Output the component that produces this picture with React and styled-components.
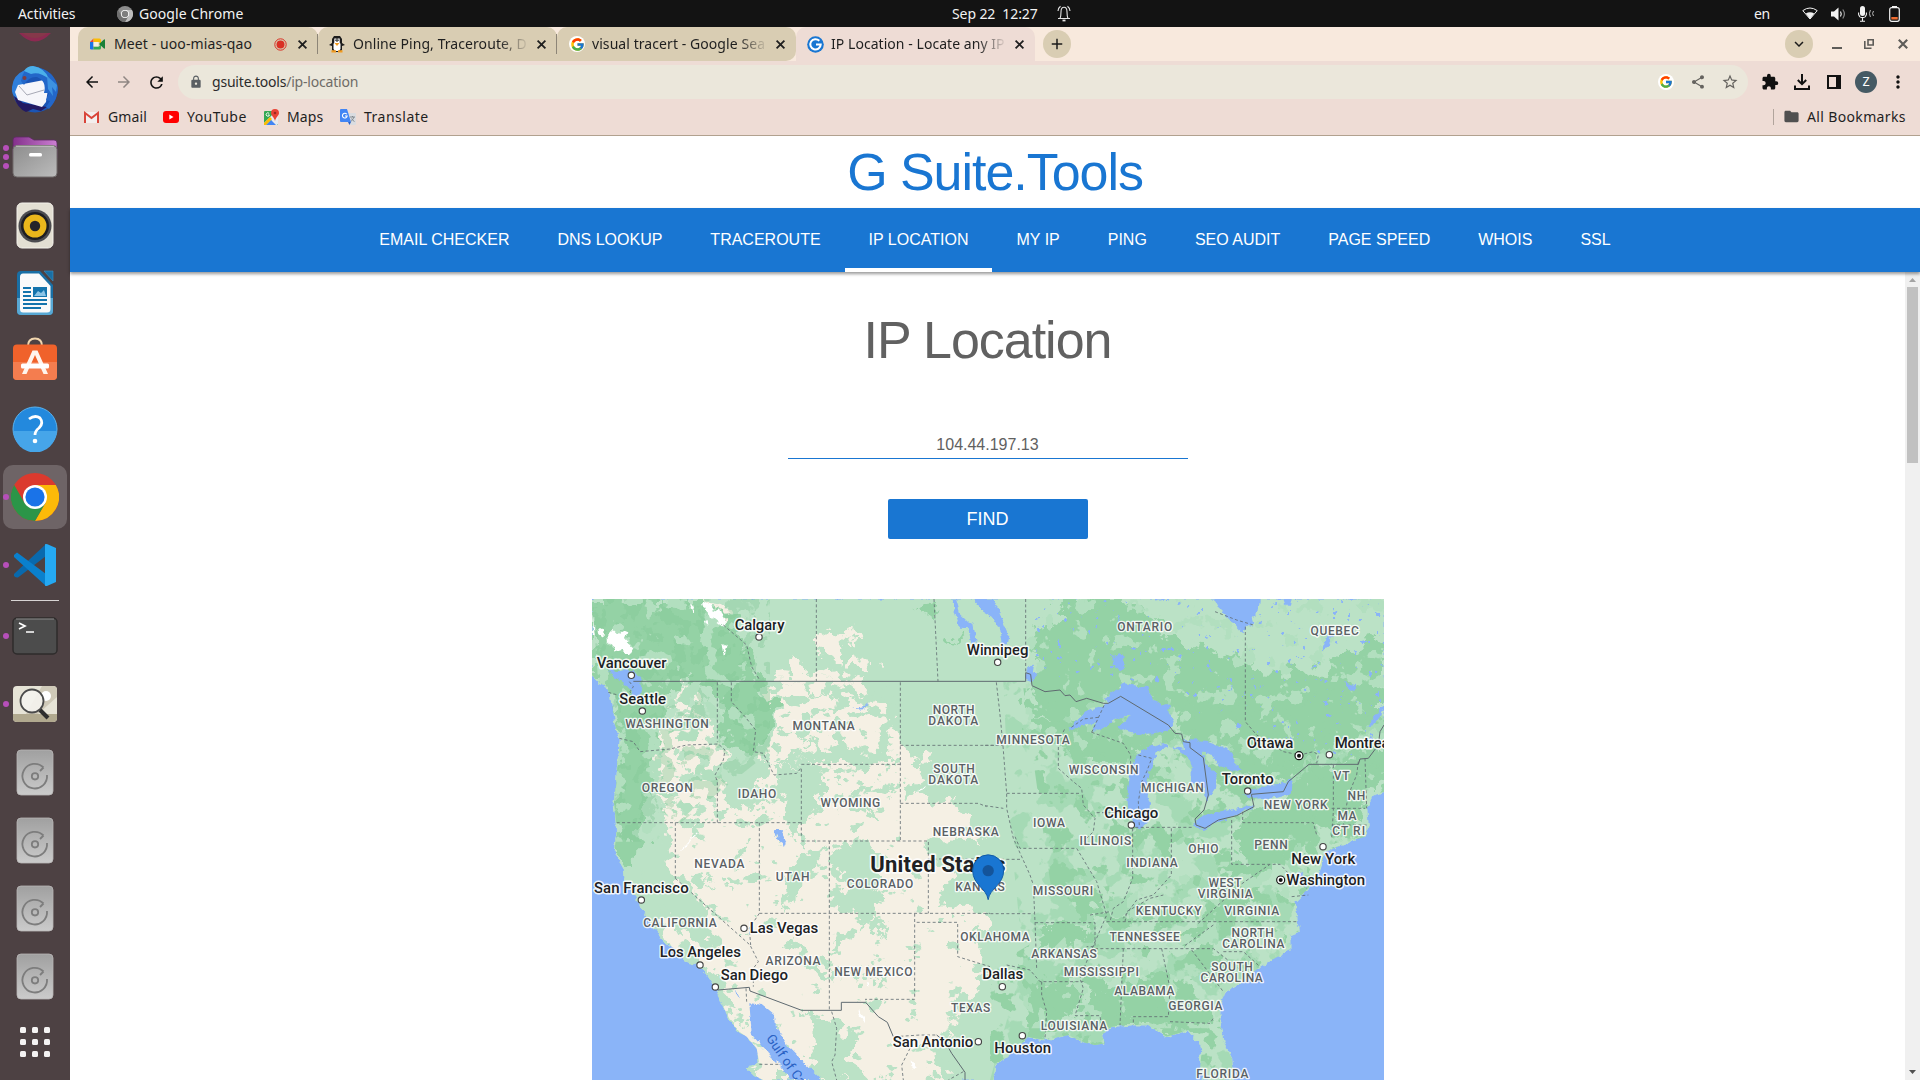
import React from "react";
import styled, { createGlobalStyle } from "styled-components";
import {
  MdArrowBack,
  MdArrowForward,
  MdRefresh,
  MdLock,
  MdShare,
  MdStarBorder,
  MdExtension,
  MdFolder,
  MdMoreVert,
  MdAdd,
  MdKeyboardArrowDown,
} from "react-icons/md";
import { FcGoogle } from "react-icons/fc";

const GlobalStyle = createGlobalStyle`
  *, *::before, *::after { box-sizing: border-box; }
  html, body { margin: 0; padding: 0; background: #fff; overflow: hidden; }
  svg { display: block; flex: none; }
`;

const uiFont = `"Noto Sans", "Open Sans", sans-serif`;
const pageFont = `"Liberation Sans", Arial, sans-serif`;

const Desktop = styled.div`
  display: flex;
  flex-direction: column;
  width: 1920px;
  height: 1080px;
  overflow: hidden;
  font-family: ${uiFont};
`;

/* ---------- System bar ---------- */

const SystemBar = styled.header`
  display: flex;
  align-items: center;
  height: 27px;
  flex: none;
  padding: 0 20px 0 18px;
  background: #131313;
  color: #f2f2f2;
  font-size: 14px;
`;

const SystemText = styled.span`
  width: ${(p) => p.$w}px;
  margin-left: ${(p) => p.$gap || 0}px;
  letter-spacing: ${(p) => p.$ls || 0}px;
  line-height: 26px;
  white-space: pre;
  flex: none;
`;

const SystemIcon = styled.span`
  display: flex;
  margin-left: ${(p) => p.$gap}px;
`;

const Spacer = styled.div`
  flex: 1;
`;

const Body = styled.div`
  display: flex;
  flex: 1;
  min-height: 0;
`;

/* ---------- Dock ---------- */

const Dock = styled.nav`
  display: flex;
  flex-direction: column;
  align-items: stretch;
  width: 70px;
  flex: none;
  background: #4d4143;
  overflow: hidden;
`;

const DockSlot = styled.div`
  display: flex;
  align-items: center;
  height: ${(p) => p.$h || 68}px;
  flex: none;
`;

const Dot = styled.i`
  width: 6px;
  height: 6px;
  border-radius: 50%;
  background: #b64fb9;
`;

const DockTile = styled.div`
  display: flex;
  align-items: center;
  width: 64px;
  height: 64px;
  margin-left: 3px;
  border-radius: 10px;
  background: ${(p) => (p.$active ? "#6e6466" : "transparent")};
`;

const DockDots = styled.div`
  display: flex;
  flex-direction: column;
  align-items: center;
  justify-content: center;
  gap: 3px;
  width: 8px;
  height: 64px;
  margin-left: -1px;
`;

const DockIcon = styled.div`
  display: flex;
  justify-content: center;
  width: 48px;
  margin-left: 1px;
`;

const DockDivider = styled.hr`
  width: 48px;
  height: 1px;
  margin: 1px 11px 1px;
  border: 0;
  background: #d8d4d4;
  flex: none;
`;

/* ---------- Browser chrome ---------- */

const Browser = styled.div`
  display: flex;
  flex-direction: column;
  flex: 1;
  min-width: 0;
`;

const TabStrip = styled.div`
  display: flex;
  align-items: flex-start;
  height: 34px;
  flex: none;
  padding-left: 8px;
  padding-right: 10px;
  background: #f8e9dd;
`;

const Tab = styled.div`
  display: flex;
  align-items: center;
  width: ${(p) => p.$w}px;
  height: 34px;
  padding: 0 9px 0 ${(p) => p.$left || 11}px;
  border-radius: ${(p) => p.$radius};
  background: ${(p) => (p.$active ? "#eedcd5" : "#d9cdb3")};
  color: #1f1f1f;
  flex: none;
`;

const TabDivider = styled.i`
  width: 1px;
  height: 20px;
  margin: 7px 0 0 -1px;
  background: #8d8577;
  z-index: 1;
`;

const TabTitle = styled.span`
  flex: 1;
  min-width: 0;
  margin-left: ${(p) => p.$gap || 8}px;
  margin-right: ${(p) => (p.$fade ? 6 : 0)}px;
  overflow: hidden;
  white-space: pre;
  font-size: 14px;
  letter-spacing: ${(p) => p.$ls || 0}px;
  line-height: 32px;
  ${(p) => p.$fade && "mask-image: linear-gradient(to right, #000 0 calc(100% - 30px), transparent);"}
`;

const TabClose = styled.span`
  display: flex;
  margin-left: ${(p) => p.$gap || 0}px;
`;

const RoundButton = styled.button`
  display: flex;
  align-items: center;
  justify-content: center;
  width: 28px;
  height: 28px;
  margin: 3px ${(p) => p.$right || 0}px 0 ${(p) => p.$left || 0}px;
  padding: 0;
  border: 0;
  border-radius: 50%;
  background: #d9cdb3;
  color: #1b1b1b;
`;

const WindowControls = styled.div`
  display: flex;
  align-items: center;
  gap: 22px;
  height: 34px;
`;

const Toolbar = styled.div`
  display: flex;
  align-items: center;
  height: 42px;
  flex: none;
  padding: 0 0 0 13px;
  background: #eedcd5;
`;

const NavIcons = styled.div`
  display: flex;
  gap: 14px;
  width: 95px;
`;

const Omnibox = styled.div`
  display: flex;
  align-items: center;
  width: 1570px;
  height: 34px;
  padding: 0 2px 0 11px;
  border-radius: 17px;
  background: #ebe7db;
`;

const Url = styled.span`
  margin-left: 9px;
  flex: 1;
  font-size: 14px;
  letter-spacing: -0.2px;
  line-height: 30px;
  color: #2b2b2b;
`;

const UrlPath = styled.span`
  color: #6f6c67;
`;

const ActionRow = styled.div`
  display: grid;
  grid-auto-flow: column;
  grid-auto-columns: 32px;
  place-items: center;
  margin-left: ${(p) => p.$gap || 0}px;
`;

const GoogleBadge = styled.span`
  display: flex;
  align-items: center;
  justify-content: center;
  width: 16px;
  height: 16px;
  border-radius: 50%;
  background: #fff;
`;

const Avatar = styled.span`
  display: flex;
  align-items: center;
  justify-content: center;
  width: 22px;
  height: 22px;
  border-radius: 50%;
  background: #455a64;
  color: #fff;
  font: 12px Roboto, sans-serif;
`;

const BookmarkBar = styled.div`
  display: flex;
  align-items: center;
  height: 33px;
  flex: none;
  padding: 0 15px 5px 14px;
  border-bottom: 1px solid #b1a18f;
  background: #eedcd5;
`;

const Bookmark = styled.span`
  display: flex;
  align-items: center;
  gap: ${(p) => p.$gap || 8}px;
  width: ${(p) => p.$w}px;
  color: #1f1f1f;
  font-size: 14px;
  line-height: 26px;
  letter-spacing: ${(p) => p.$ls || 0}px;
  white-space: pre;
`;

const BookmarkDivider = styled.i`
  width: 1px;
  height: 16px;
  margin-right: 9px;
  background: #b1a49c;
`;

/* ---------- Page ---------- */

const Page = styled.main`
  display: flex;
  flex-direction: column;
  flex: 1;
  min-height: 0;
  background: #fff;
  font-family: ${pageFont};
`;

const SiteTitle = styled.h1`
  height: 72px;
  margin: 0;
  flex: none;
  color: #1976d2;
  font-size: 52px;
  font-weight: 400;
  line-height: 72px;
  letter-spacing: -0.02em;
  text-align: center;
`;

const SiteNav = styled.nav`
  display: flex;
  justify-content: center;
  height: 64px;
  flex: none;
  background: #1976d2;
  box-shadow: 0 2px 3px rgba(0, 0, 0, 0.4);
  z-index: 1;
`;

const SiteLink = styled.a`
  height: 64px;
  padding: 0 24px;
  border-bottom: 4px solid ${(p) => (p.$active ? "#fff" : "transparent")};
  color: #fff;
  font-size: 16px;
  line-height: 63px;
`;

const Scroller = styled.div`
  display: flex;
  flex: 1;
  min-height: 0;
`;

const Content = styled.section`
  display: flex;
  flex-direction: column;
  align-items: center;
  flex: 1;
`;

const Heading = styled.h2`
  margin: 37px 0 0;
  height: 62px;
  flex: none;
  color: #616161;
  font-size: 52px;
  font-weight: 400;
  line-height: 62px;
  letter-spacing: -0.02em;
`;

const IpInput = styled.div`
  width: 400px;
  height: 29px;
  flex: none;
  margin-top: 59px;
  border-bottom: 1px solid #1976d2;
  color: #616161;
  font-size: 16px;
  line-height: 30px;
  text-align: center;
`;

const FindButton = styled.button`
  width: 200px;
  height: 40px;
  flex: none;
  margin: 40px 0 60px;
  border: 0;
  border-radius: 2px;
  background: #1976d2;
  color: #fff;
  font: 18px/40px ${pageFont};
  padding: 0;
`;

const MapFrame = styled.div`
  width: 792px;
  height: 481px;
  overflow: hidden;
  flex: none;
`;

const ScrollTrack = styled.div`
  display: flex;
  flex-direction: column;
  align-items: center;
  width: 15px;
  padding: 6px 0;
  background: #f0f0f0;
`;

const ScrollThumb = styled.div`
  width: 11px;
  height: 176px;
  margin-top: 5px;
  background: #c1c1c1;
`;

/* ---------- Small icons ---------- */

const CrossIcon = ({ size = 13, color = "#1f1f1f", weight = 1.8 }) => (
  <svg width={size} height={size} viewBox="0 0 13 13">
    <path d="M2.6 2.6 10.4 10.4M10.4 2.6 2.6 10.4" stroke={color} strokeWidth={weight} />
  </svg>
);

const MeetIcon = () => (
  <svg width="17" height="16" viewBox="0 0 17 16">
    <path d="M1 6V12.2Q1 13.5 2.3 13.5H4.5V6Z" fill="#1a73e8" />
    <path d="M1 6 4.5 2.5V6Z" fill="#ea4335" />
    <path d="M4.5 2.5H10.5Q12 2.5 12 4V8L10 6H4.5Z" fill="#fbbc04" />
    <path d="M4.5 10.5H10L12 8V12Q12 13.5 10.5 13.5H4.5Z" fill="#34a853" />
    <path d="M10 8 15 3.4Q16 3 16 4V12Q16 13 15 12.6Z" fill="#188038" />
    <path d="M4.5 6H9.5V10.5H4.5Z" fill="#f4efe0" />
  </svg>
);

const PenguinIcon = () => (
  <svg width="18" height="18" viewBox="0 0 18 18">
    <path d="M6 1H12L14 4V8L17 10 14 11V15L12 17H6L4 15V11L1 10 4 8V4Z" fill="#1c1c1c" />
    <path d="M6.5 7H11.5L12.5 9V14L11 16H7L5.5 14V9Z" fill="#fff" />
    <path d="M6.3 3.5H8.5V7H6.3ZM9.5 3.5H11.7V7H9.5Z" fill="#fff" />
    <path d="M7.4 4.5H8.4V6H7.4ZM9.6 4.5H10.6V6H9.6Z" fill="#111" />
    <path d="M6.5 8H11.5L9 11ZM3.5 15.3H8V17.6H3.5ZM10 15.3H14.5V17.6H10Z" fill="#f29a1f" />
  </svg>
);

const GSuiteIcon = () => (
  <svg width="17" height="17" viewBox="0 0 17 17">
    <circle cx="8.5" cy="8.5" r="8.3" fill="#1976d2" />
    <path d="M12.3 4.8A5.2 5.2 0 1 0 13.7 8.6H9" fill="none" stroke="#fff" strokeWidth="2" />
  </svg>
);

const RecordIcon = () => (
  <svg width="13" height="13" viewBox="0 0 13 13">
    <circle cx="6.5" cy="6.5" r="5.7" fill="none" stroke="#d93025" strokeWidth="1" />
    <circle cx="6.5" cy="6.5" r="4" fill="#d93025" />
  </svg>
);

const GmailIcon = () => (
  <svg width="15" height="12" viewBox="0 0 15 12">
    <path d="M0 1H15V12H0Z" fill="#f3efee" />
    <path d="M1 12V2L7.5 7 14 2V12" fill="none" stroke="#d9453a" strokeWidth="2" />
  </svg>
);

const YouTubeIcon = () => (
  <svg width="16" height="12" viewBox="0 0 16 12">
    <rect width="16" height="12" rx="3" fill="#f00" />
    <path d="M6.3 3.5V8.5L10.5 6Z" fill="#fff" />
  </svg>
);

const MapsIcon = () => (
  <svg width="15" height="16" viewBox="0 0 15 16">
    <rect y="2" width="14" height="14" rx="1" fill="#34a853" />
    <path d="M0 14 12 2H14V15L13 16H10L7 11 2 16H1Z" fill="#e8eaed" />
    <path d="M2 16 7 11 12 16Z" fill="#4285f4" />
    <path d="M0 16V14L6 8 8 10 2 16Z" fill="#fbbc04" />
    <path d="M11 0A4 4 0 0 1 15 4C15 6.5 12 8 11 12 10 8 7 6.5 7 4A4 4 0 0 1 11 0Z" fill="#ea4335" />
    <circle cx="11" cy="4" r="1.3" fill="#9c2a20" />
    <path d="M5.2 4.5A1.7 1.7 0 1 0 5.5 6H4" fill="none" stroke="#fff" strokeWidth=".9" />
  </svg>
);

const TranslateIcon = () => (
  <svg width="16" height="16" viewBox="0 0 16 16">
    <path d="M6 4H15Q16 4 16 5V15Q16 16 15 16H9Z" fill="#dadce0" />
    <path d="M1 0H7L11 13H1Q0 13 0 12V1Q0 0 1 0Z" fill="#4285f4" />
    <path d="M8 13H11L9.5 16Z" fill="#2f5fc4" />
    <path d="M6.8 5.2A2.4 2.4 0 1 0 7.2 7H5" fill="none" stroke="#fff" strokeWidth="1.1" />
    <path d="M10 8H15M12.5 7V8M14 8Q13 11 10.8 12.5M11.5 9.5Q12.5 11.5 14.5 12.5" fill="none" stroke="#7c8288" strokeWidth=".9" />
  </svg>
);

const DownloadIcon = () => (
  <svg width="16" height="16" viewBox="0 0 16 16" fill="none" stroke="#111" strokeWidth="2">
    <path d="M8 0V10M3.8 6 8 10.2 12.2 6M1 11.5V15H15V11.5" />
  </svg>
);

const SidePanelIcon = () => (
  <svg width="14" height="14" viewBox="0 0 14 14">
    <rect x="1" y="1" width="12" height="12" fill="none" stroke="#111" strokeWidth="2" />
    <rect x="9" y="1" width="4" height="12" fill="#111" />
  </svg>
);

const ChromeLogo = ({ size, mono }) => {
  const c = mono ? ["#8d8d8d", "#bdbdbd", "#6f6f6f", "#7d7d7d"] : ["#db3a2e", "#fcba08", "#2b9548", "#1a73e8"];
  return (
    <svg width={size} height={size} viewBox="0 0 48 48">
      <circle cx="24" cy="24" r="24" fill={c[0]} />
      <path d="M24 12H44.8A24 24 0 0 1 24 48L34.4 30Z" fill={c[1]} />
      <path d="M3.2 12A24 24 0 0 0 24 48L34.4 30 13.6 30Z" fill={c[2]} />
      <circle cx="24" cy="24" r="12" fill="#fff" />
      <circle cx="24" cy="24" r="9.6" fill={c[3]} />
    </svg>
  );
};

const BellIcon = () => (
  <svg width="14" height="17" viewBox="0 0 14 17" fill="none" stroke="#e4e4e4" strokeWidth="1.1">
    <path d="M1 13.5H13M3 13.5Q4 11 4 7C4 3.8 5.4 2.3 7 2.3S10 3.8 10 7Q10 11 11 13.5M1 6Q1 3 3.5 1.2M13 6Q13 3 10.5 1.2" />
    <path d="M5.5 15.5H8.5" strokeWidth="1.8" />
  </svg>
);

const WifiIcon = () => (
  <svg width="16" height="13" viewBox="0 0 16 13">
    <path d="M.8 3.6Q8-1.6 15.2 3.6L8 12Z" fill="none" stroke="#f2f2f2" strokeWidth="1" />
    <path d="M3.8 6.6Q8 4 12.2 6.6L8 12Z" fill="#f2f2f2" />
  </svg>
);

const VolumeIcon = () => (
  <svg width="15" height="14" viewBox="0 0 15 14">
    <path d="M0 4.5H3L7.5.5V13.5L3 9.5H0Z" fill="#f2f2f2" />
    <path d="M9.5 4.5Q11 7 9.5 9.5" fill="none" stroke="#f2f2f2" strokeWidth="1.2" />
    <path d="M11.8 2.5Q15 7 11.8 11.5" fill="none" stroke="#8a8a8a" strokeWidth="1.2" />
  </svg>
);

const MicIcon = () => (
  <svg width="16" height="16" viewBox="0 0 16 16">
    <rect x="2" width="5" height="10" rx="2.5" fill="#f2f2f2" />
    <path d="M.6 6.5V8.5A4 4 0 0 0 8.4 8.5V6.5M4.5 12V15M2 15.3H7" fill="none" stroke="#f2f2f2" strokeWidth="1.1" />
    <path d="M12.4 4Q10.5 7.5 12.4 11M15.5 5Q13.6 7.5 15.5 10" fill="none" stroke="#bbb" strokeWidth="1" />
  </svg>
);

const BatteryIcon = () => (
  <svg width="11" height="16" viewBox="0 0 11 16">
    <path d="M3 0H8V2H3Z" fill="#f2f2f2" />
    <rect x=".7" y="1.7" width="9.6" height="13.6" rx="2" fill="none" stroke="#f2f2f2" strokeWidth="1.2" />
    <path d="M2.3 11H8.7V13.5H2.3Z" fill="#ee6b2f" />
  </svg>
);

const MinimizeIcon = () => (
  <svg width="10" height="12" viewBox="0 0 10 12">
    <path d="M0 9H10V11H0Z" fill="#5e5c58" />
  </svg>
);

const RestoreIcon = () => (
  <svg width="10" height="10" viewBox="0 0 10 10" fill="none" stroke="#5e5c58" strokeWidth="1.6">
    <path d="M4 .8H9.2V6H4ZM.8 2V9.2H7.5" />
  </svg>
);

/* ---------- Dock icons ---------- */

const CrimsonRim = () => (
  <svg width="48" height="28" viewBox="0 0 48 28">
    <path d="M8 6Q24 23 40 6Z" fill="#8c2a51" />
    <path d="M11 6Q24 16 37 6Z" fill="#85384a" />
  </svg>
);

const ThunderbirdIcon = () => (
  <svg width="48" height="48" viewBox="0 0 48 48">
    <circle cx="24" cy="25" r="22.5" fill="#1b55b5" />
    <path d="M1 22Q2 10 14 5L12 18 6 34Q0 30 1 22Z" fill="#2f7fdb" />
    <path d="M3 31 12 38 36 42 30 46 22 44 15 47Q6 43 3 31Z" fill="#231a62" />
    <path d="M7 20 33 15 37 24 35 37 31 42 7 35 4 27Z" fill="#f6f6fa" />
    <path d="M8 21 16 30 33 25" fill="none" stroke="#a7a9b5" strokeWidth="1" />
    <path d="M10 16Q12 3 22 1Q44 5 47 23 47 34 38 44L35 42 39 36 35 35 38 28 33 28Q36 16 26 12 18 11 13 20Z" fill="#2367c9" />
    <path d="M13 6Q16 1 22 1 34 3 38 14 28 6 20 9Z" fill="#4bb0ea" />
    <path d="M36 11 46 20 45 27 41 22 42 31 37 24Z" fill="#3d92e0" />
    <circle cx="13.5" cy="13" r="2" fill="#7e3e42" />
  </svg>
);

const FilesIcon = () => (
  <svg width="46" height="42" viewBox="0 0 46 42">
    <defs>
      <linearGradient id="files" x1="0" x2="1" y2="1">
        <stop stopColor="#8d8d8d" />
        <stop offset="1" stopColor="#bcbcbc" />
      </linearGradient>
      <linearGradient id="filesTab">
        <stop stopColor="#84308c" />
        <stop offset="1" stopColor="#cb7fd2" />
      </linearGradient>
    </defs>
    <path d="M1 4Q1 1 4 1H17L22 4H42Q45 4 45 7V22H1Z" fill="url(#filesTab)" stroke="#5d2b62" strokeWidth=".8" />
    <rect x="1" y="9.5" width="44" height="31.5" rx="4" fill="url(#files)" stroke="#706b6b" />
    <path d="M4 10.2H42" stroke="#d2d2d2" strokeWidth=".8" />
    <rect x="17" y="17" width="13" height="3.6" rx="1.5" fill="#fff" />
  </svg>
);

const RhythmboxIcon = () => (
  <svg width="38" height="47" viewBox="0 0 38 47">
    <rect x="1" y="1" width="36" height="45" rx="5" fill="#e3dfd3" stroke="#f4f2ec" />
    <circle cx="19" cy="24" r="16.5" fill="#4c4c50" />
    <circle cx="19" cy="24" r="14" fill="#1e1e22" />
    <circle cx="19" cy="24" r="11.5" fill="#eab71c" />
    <circle cx="19" cy="24" r="5.2" fill="#25252a" />
  </svg>
);

const WriterIcon = () => (
  <svg width="38" height="46" viewBox="0 0 38 46">
    <path d="M5 1H24L37 15V41Q37 45 33 45H5Q1 45 1 41V5Q1 1 5 1Z" fill="#196fa5" />
    <path d="M1 28H37V41Q37 45 33 45H5Q1 45 1 41Z" fill="#58a8d4" />
    <path d="M28 1H37V11Z" fill="#196fa5" stroke="#3d93c7" strokeWidth=".6" />
    <path d="M7 3.5H23L34.5 16V39Q34.5 42.5 31 42.5H7Q4 42.5 4 39V7Q4 3.5 7 3.5Z" fill="#fafafa" />
    <path d="M7 18H15M7 22H15M7 26H15M7 30H31M7 34H31M7 38H25" stroke="#1474ad" strokeWidth="2" />
    <rect x="17" y="17" width="14" height="10" fill="#1474ad" />
    <path d="M18 26 22 21 25 23 28 20 30 26Z" fill="#8cc4e6" />
  </svg>
);

const SoftwareIcon = () => (
  <svg width="46" height="49" viewBox="0 0 46 49">
    <path d="M16 9Q16 1.5 23 1.5T30 9" fill="none" stroke="#f2d6ae" strokeWidth="2" />
    <rect x="1" y="7.5" width="44" height="35.5" rx="4" fill="#f0622b" />
    <path d="M1 25H45V39Q45 43 41 43H5Q1 43 1 39Z" fill="#f47d4f" />
    <path d="M20.5 13.5H25.5L36 37H31.5L23 18 14.5 37H10Z" fill="#fff5ee" />
    <rect x="9" y="26.5" width="28" height="5" rx="1.5" fill="#fff" />
  </svg>
);

const HelpIcon = () => (
  <svg width="46" height="46" viewBox="0 0 46 46">
    <circle cx="23" cy="23" r="22" fill="#2389dd" stroke="#5ab2ee" />
    <path d="M1.5 25A21.5 21.5 0 0 0 44.5 25Z" fill="#46a5e9" />
    <path d="M17 13Q23 8.5 28 12 32 17 27 22 23 25 23 29" fill="none" stroke="#fff" strokeWidth="2.8" />
    <circle cx="23" cy="35" r="2.3" fill="#fff" />
  </svg>
);

const CodeIcon = () => (
  <svg width="44" height="44" viewBox="0 0 44 44">
    <path d="M1 31 33 1V13L5 34.5Q3 35 1 33Z" fill="#0969ad" />
    <path d="M1 12 4 9.5 33 31V43L1 14Z" fill="#0a80cd" />
    <path d="M32 1.2Q33 .6 34.5 1.2L43 5V39L34.5 42.8Q33 43.4 32 42.5Z" fill="#25a9f2" />
  </svg>
);

const TerminalIcon = () => (
  <svg width="46" height="38" viewBox="0 0 46 38">
    <rect x="1" y="1" width="44" height="36" rx="4" fill="#4c4c4c" stroke="#2e2b2b" strokeWidth="1.5" />
    <path d="M4 2H42" stroke="#8a8a8a" />
    <path d="M7 6 13 9 7 12M14 15H22" fill="none" stroke="#fff" strokeWidth="1.7" />
  </svg>
);

const ViewerIcon = () => (
  <svg width="46" height="38" viewBox="0 0 46 38">
    <rect x="1" y="1" width="44" height="36" rx="4" fill="#e6e3d6" />
    <path d="M30 1H41Q45 1 45 5V12L26 29H14Z" fill="#cfc9b8" />
    <path d="M1 29H45V33Q45 37 41 37H5Q1 37 1 33Z" fill="#b1a98f" />
    <circle cx="34" cy="11" r="5" fill="#fff" />
    <circle cx="20" cy="16" r="11.5" fill="#f4f3ee" fillOpacity=".9" stroke="#4b4b4b" strokeWidth="1.8" />
    <path d="M28 25 36 33" stroke="#2e2e2e" strokeWidth="4" />
  </svg>
);

const DiskIcon = ({ id }) => (
  <svg width="38" height="47" viewBox="0 0 38 47">
    <defs>
      <linearGradient id={id} x2="0" y2="1">
        <stop stopColor="#a0a0a0" />
        <stop offset="1" stopColor="#cbcbcb" />
      </linearGradient>
    </defs>
    <rect x="1" y="1" width="36" height="45" rx="4" fill={`url(#${id})`} stroke="#b9b6b6" strokeWidth=".8" />
    <path d="M27.5 18.5A12.3 12.3 0 1 0 31 26M24 22 27.5 18.5" fill="none" stroke="#7d7d7d" strokeWidth="1.8" />
    <circle cx="19" cy="27.3" r="3.2" fill="none" stroke="#7d7d7d" strokeWidth="1.8" />
  </svg>
);

const AppsIcon = () => (
  <svg width="32" height="36" viewBox="0 0 32 36" fill="#f5f3f3">
    {[1, 13, 25].map((y) => [1, 13, 25].map((x) => <rect key={`${x}-${y}`} x={x} y={y} width="6" height="6" rx="1.5" />))}
  </svg>
);

const dockItems = [
  { icon: <ThunderbirdIcon />, dots: 0 },
  { icon: <FilesIcon />, dots: 3 },
  { icon: <RhythmboxIcon />, dots: 0 },
  { icon: <WriterIcon />, dots: 0 },
  { icon: <SoftwareIcon />, dots: 0 },
  { icon: <HelpIcon />, dots: 0 },
  { icon: <ChromeLogo size={48} />, dots: 1, active: true },
  { icon: <CodeIcon />, dots: 1 },
  "divider",
  { icon: <TerminalIcon />, dots: 1 },
  { icon: <ViewerIcon />, dots: 1 },
  { icon: <DiskIcon id="disk1" />, dots: 0 },
  { icon: <DiskIcon id="disk2" />, dots: 0 },
  { icon: <DiskIcon id="disk3" />, dots: 0 },
  { icon: <DiskIcon id="disk4" />, dots: 0 },
  { icon: <AppsIcon />, dots: 0 },
];

/* ---------- Map data (three drawing units per pixel) ---------- */

const LAND =
  "M6 12 6 240 25 262 45 270 62 300 65 330 75 390 90 430 88 470 82 510 80 560 72 620 75 650 78 683 80 720 72 770 98 805 102 850 115 880 135 900 148 935 165 955 195 1000 215 1035 260 1065 285 1100 320 1108 345 1130 375 1175 400 1235 420 1275 440 1305 470 1325 500 1360 507 1400 490 1415 468 1418 490 1440 520 1455 1210 1455 1215 1410 1250 1385 1290 1350 1315 1325 1365 1335 1435 1320 1465 1335 1490 1345 1515 1350 1545 1345 1535 1320 1565 1295 1625 1290 1675 1290 1730 1325 1795 1305 1825 1340 1835 1370 1830 1420 1840 1455 1930 1455 1925 1390 1900 1340 1890 1290 1890 1240 1905 1190 1955 1160 2010 1115 2045 1095 2100 1065 2100 1020 2125 1010 2120 960 2115 920 2155 880 2185 830 2195 800 2205 770 2265 745 2325 725 2335 690 2330 640 2350 600 2382 590 2382 12Z";

const CREAM = [
  "M200 480 215 440 225 400 250 350 262 300 285 270 305 300 330 350 375 405 385 450 410 490 380 545 400 600 440 630 460 640 540 620 500 560 500 540 540 530 520 480 560 420 570 360 545 330 550 290 545 262 820 262 830 310 885 340 925 420 920 470 1010 490 1005 530 950 560 940 600 1090 630 1140 670 1180 740 1020 730 1010 800 1100 830 1060 880 1050 940 1200 950 1205 1000 1170 1030 1160 1090 1190 1130 1130 1200 1090 1260 1090 1320 1010 1340 1020 1400 1080 1460 700 1460 600 1455 520 1455 440 1300 400 1180 310 1060 240 1030 200 960 330 960 290 900 250 840 235 740 230 700 195 620 205 580 190 520Z",
  "M668 120 700 95 750 120 785 110 800 140 770 130 750 185 710 180 675 175Z",
  "M585 230 625 195 650 225 690 235 740 225 800 260 560 262Z",
  "M750 205 800 190 865 215 850 232 790 225Z",
  "M195 140 250 140 255 170 225 190 200 165Z",
  "M340 12 395 20 430 65 400 90 350 45Z",
  "M125 70 165 65 180 130 160 125Z",
  "M20 70 50 70 50 90 25 85Z",
];

const GREEN_ON_CREAM = [
  "M560 520 640 500 705 520 690 580 690 640 640 690 650 740 600 720 580 640Z",
  "M410 480 500 470 520 520 490 600 440 630 405 590 390 540Z",
  "M740 740 830 735 870 790 870 860 890 900 850 960 880 1000 870 1030 840 960 810 1025 800 960 730 930 760 860 720 830Z",
  "M570 960 590 850 620 790 700 750 690 790 640 830 630 920 570 935Z",
  "M580 1040 620 1045 650 1090 720 1105 740 1160 690 1140 620 1090Z",
  "M650 1265 720 1270 780 1330 790 1400 840 1455 680 1455 670 1370Z",
  "M120 740 240 760 255 850 320 900 350 1010 390 1050 370 1070 300 1020 240 980 200 900 140 860Z",
  "M375 1170 410 1200 450 1265 455 1280 420 1260Z",
  "M770 620 785 600 850 650 880 670 860 675Z",
  "M250 340 330 340 320 365 260 370Z",
  "M640 350 700 400 640 440 720 450 700 470 610 430Z",
  "M560 500 640 480 700 470 780 460 900 470 920 500 700 505 640 500 580 510Z",
  "M650 290 760 285 830 300 870 320 800 330 700 305Z",
  "M440 760 465 740 455 800 440 820ZM400 850 425 840 400 880ZM350 840 365 830 360 870Z",
  "M730 1050 750 1040 765 1065 745 1075ZM820 1125 840 1140 835 1180 822 1170ZM860 1130 875 1140 870 1180 855 1170Z",
];

const DARK = [
  "M6 12 350 12 430 90 480 150 490 240 540 290 560 360 520 430 480 470 410 460 390 300 330 260 230 290 210 440 200 520 180 600 150 640 160 700 130 750 80 740 70 600 90 480 65 300 6 240Z",
  "M1335 230 1310 330 1415 400 1435 380 1545 300 1605 270 1745 330 1785 430 1925 440 1965 540 2085 560 2165 500 2382 370 2382 130 2245 180 2185 230 2025 230 1945 200 1885 170 1825 150 1745 130 1665 50 1605 12 1385 12 1435 70 1325 110Z",
  "M1435 410 1515 415 1615 400 1755 420 1785 440 1725 445 1635 470 1615 520 1515 490 1445 480 1405 440 1320 400 1310 350Z",
  "M2165 515 2325 490 2382 420 2382 560 2325 600 2315 680 2225 690 2130 700 2070 760 1990 820 1930 740 1965 670 2085 600Z",
  "M2065 740 2185 730 2045 820 1965 920 1885 980 1785 1050 1745 1060 1825 990 1885 900 1925 820Z",
  "M1335 1160 1475 1160 1455 1260 1385 1320 1315 1320 1295 1240Z",
  "M1485 1200 1585 1180 1745 1120 1825 1220 1885 1280 1805 1310 1725 1320 1675 1290 1475 1290Z",
  "M1430 910 1510 900 1530 940 1480 970Z",
  "M1345 990 1500 990 1515 1040 1420 1040 1340 1060Z",
  "M980 20 1045 12 1040 60 970 45Z",
  "M1050 130 1110 140 1120 150 1060 145Z",
  "M75 725 140 725 160 760 110 800 75 780Z",
];

const WATER = [
  "M58 215 80 228 130 225 155 260 150 300 130 312 122 285 100 262 70 245Z",
  "M478 1225 515 1230 552 1260 555 1295 600 1360 650 1410 695 1455 600 1455 570 1410 540 1380 515 1350 485 1315Z",
  "M1435 402 1485 350 1555 325 1545 308 1585 280 1605 264 1625 270 1675 277 1690 310 1720 332 1740 328 1735 355 1755 370 1745 400 1715 412 1685 415 1645 420 1600 408 1585 396 1625 362 1615 358 1575 376 1535 402 1505 412 1515 385Z",
  "M1622 520 1640 480 1675 455 1725 443 1735 452 1700 475 1685 520 1665 580 1680 625 1675 675 1650 700 1640 699 1615 655 1612 600Z",
  "M1748 455 1785 462 1780 435 1850 437 1920 465 1935 500 1952 528 1925 530 1885 508 1870 480 1835 472 1845 502 1880 540 1875 580 1850 622 1840 570 1805 560 1805 500 1775 472Z",
  "M1808 688 1845 660 1905 648 1975 633 1992 635 1925 667 1885 682 1845 702 1820 698Z",
  "M1960 598 2015 575 2065 570 2105 553 2102 598 2065 605 2025 610 1975 612Z",
  "M1872 12 1890 45 1925 80 1955 112 1990 85 1985 70 2005 50 2010 12Z",
  "M1150 12 1210 12 1235 70 1255 120 1250 148 1235 148 1228 100 1205 65 1180 50Z",
  "M1085 12 1098 12 1112 60 1135 82 1150 90 1160 140 1145 150 1135 100 1110 98 1095 50Z",
  "M1570 185 1585 178 1600 182 1602 225 1590 232 1572 210Z",
  "M1310 225 1330 205 1325 235 1345 240 1325 262 1308 255Z",
  "M555 705 570 705 590 740 585 752 565 740Z",
  "M790 342 825 340 835 325 825 332 800 338Z",
  "M2335 395 2382 320 2382 345 2350 390Z",
  "M2198 160 2210 130 2230 120 2215 150 2200 170Z",
  "M2265 262 2295 270 2300 285 2280 290Z",
  "M2150 880 2140 870 2125 830 2135 830 2150 870Z",
  "M435 1185 450 1200 448 1210 438 1195Z",
  "M2080 12 2105 12 2100 35 2088 35Z",
];

const LONG_ISLAND = ["M2200 760 2265 735 2280 742 2225 762Z"];

const SNOW = [
  "M8 60 15 125 6 120ZM25 95 45 105 40 125 28 118ZM52 120 65 105 78 118 95 105 112 112 105 130 130 155 118 180 98 165 78 172 70 155 55 148ZM300 30 312 35 308 55ZM338 20 358 25 372 48 385 40 410 78 400 92 372 70 358 72ZM395 145 410 150 400 182ZM340 75 355 85 350 95Z",
  "M980 595 1005 575 1000 585ZM300 735 318 715 320 722ZM270 770 310 725 290 755ZM805 1245 825 1270 825 1280 810 1270ZM962 1395 980 1415 965 1425ZM830 1160 842 1165 835 1175Z",
];

const STATE_LINES = [
  // north-west
  "M679 12V259M1032 12 1044 259M382 262V440M424 262V320L465 365 497 405 490 470 520 475 552 540 620 535 634 518V728M88 430 130 440 150 470 240 462 290 450 385 447 405 465 400 495 375 540 382 560V683M80 683H634M256 683V850M508 683V955M634 508H931M931 262V740M931 451H1225M931 625H1165L1190 635M400 90 470 150 485 215 506 250V259M55 292 90 302M118 260 130 275 120 290 130 312",
  // south-west
  "M634 738H1015V955M256 850 480 1050 505 1100 490 1120V1175M508 955 478 1000 482 1050M508 955H1200M718 738V1245M974 956V1213H825M980 982H1103V1085L1200 1115M1015 792H1190M725 1250 740 1300 735 1380 725 1400 740 1455M915 1325 990 1320 1040 1320M960 1360 935 1410 940 1455M468 1180 470 1220M508 1408H565M1120 1430 1075 1455",
  // north-east
  "M1307 12V235M1219 262 1228 340 1238 440 1250 595V640L1270 730 1320 840 1330 870 1335 980 1340 1120M1185 451H1240M1250 595H1470M1185 632 1240 640M1405 440 1425 400M1505 412 1545 325M1525 367 1480 372 1440 400M1505 412 1600 445 1622 480 1622 520M1405 440V520L1450 560 1475 580 1480 630 1515 670 1510 710 1480 740M1520 653H1615M1645 480 1685 490 1670 530 1655 560 1645 620 1648 695M1620 697H1808M1744 700V840L1690 900 1640 915 1600 970M1966 95V380L2000 420 2080 470 2130 480 2170 470 2185 480 2180 505M1875 50 1940 75 1990 90M1925 675V808H2070L2100 840 2150 880M1958 650V683H2170L2180 720M2230 510V650L2225 730M2305 500 2300 540 2275 600 2260 690M2325 490 2330 640M2225 640H2325M2225 690H2330",
  // south-east
  "M1275 725 1290 760H1460L1520 860 1550 960 1500 1075 1470 1150 1480 1180 1455 1262H1530L1535 1300M1628 700V850L1600 920 1570 940 1560 980M1185 793H1290M1185 956H1330M1335 983H1515V1055H1490M1550 980H2125M1515 1061H1870L1990 1155M1605 980 1610 950 1680 910 1720 900M1600 1061 1590 1290M1715 1061 1740 1180 1735 1265H1630V1290M1740 1280 1860 1285 1870 1270M1805 1065 1900 1190M1870 990 1780 1055M1825 985 1950 870 2040 808M1250 1110 1320 1125 1350 1160H1480M1355 1160V1200L1370 1250 1365 1330M2105 905 2155 900M1500 960 1560 950M1900 1070 1960 1070 2010 1115",
];

const COUNTRY_LINES =
  "M130 259H1307V233L1322 238 1326 272 1365 290 1410 285 1425 302 1440 300 1458 320 1490 310 1540 325H1555L1592 304 1735 390 1755 415 1775 417 1780 440 1800 443 1800 458 1840 488 1855 600 1842 645 1815 672 1818 690 1845 700 1885 675 1940 662 1992 635 1984 598 2080 590 2095 560 2157 508H2305L2310 492 2335 490 2365 450 2370 410 2382 390M384 1185 478 1177 480 1188 635 1246H754V1222H827L865 1265 892 1282 910 1325 M1040 1320 1065 1340 1085 1375 1125 1432V1455";

const stateLabels = [
  ["WASHINGTON", 231, 397, 248], ["MONTANA", 701, 404, 184], ["NORTH", 1091, 356, 122], ["DAKOTA", 1090, 389, 147],
  ["SOUTH", 1092, 532, 122], ["DAKOTA", 1090, 567, 147], ["OREGON", 232, 590, 150], ["IDAHO", 501, 608, 113],
  ["WYOMING", 781, 636, 176], ["NEBRASKA", 1127, 722, 195], ["ONTARIO", 1664, 106, 162], ["QUEBEC", 2234, 118, 142],
  ["MINNESOTA", 1329, 447, 217], ["WISCONSIN", 1541, 536, 206], ["MICHIGAN", 1747, 590, 185], ["IOWA", 1377, 694, 93],
  ["VT", 2255, 555, 44], ["NH", 2299, 615, 50], ["MA", 2271, 673, 54], ["CT RI", 2276, 718, 96],
  ["NEW YORK", 2117, 642, 188], ["NEVADA", 388, 817, 148], ["UTAH", 608, 856, 98], ["COLORADO", 870, 878, 196],
  ["KANSAS", 1170, 887, 145], ["CALIFORNIA", 270, 996, 218], ["ARIZONA", 609, 1109, 162], ["NEW MEXICO", 850, 1141, 232],
  ["OKLAHOMA", 1215, 1037, 205], ["TEXAS", 1142, 1249, 115], ["ILLINOIS", 1546, 750, 152], ["OHIO", 1840, 772, 88],
  ["PENN", 2043, 760, 98], ["INDIANA", 1686, 815, 152], ["WEST", 1905, 874, 96], ["VIRGINIA", 1906, 908, 162],
  ["MISSOURI", 1419, 898, 178], ["KENTUCKY", 1736, 960, 194], ["VIRGINIA", 1985, 960, 162], ["TENNESSEE", 1664, 1036, 208],
  ["NORTH", 1988, 1025, 124], ["CAROLINA", 1990, 1059, 184], ["ARKANSAS", 1422, 1088, 194], ["MISSISSIPPI", 1534, 1141, 222],
  ["SOUTH", 1926, 1126, 122], ["CAROLINA", 1925, 1161, 184], ["ALABAMA", 1663, 1198, 178], ["GEORGIA", 1816, 1245, 160],
  ["LOUISIANA", 1452, 1303, 196], ["FLORIDA", 1897, 1448, 154],
];

// name, centre, baseline, width, marker x, marker y, is it a capital
const cities = [
  ["Calgary", 509, 104, 150, 507, 126], ["Vancouver", 125, 219, 210, 124, 241], ["Seattle", 158, 326, 140, 157, 348],
  ["Winnipeg", 1223, 181, 185, 1223, 202], ["Ottawa", 2040, 458, 140, 2127, 482, true], ["Montreal", 2322, 458, 176, 2218, 479],
  ["Toronto", 1973, 567, 156, 1973, 588], ["Chicago", 1624, 669, 162, 1624, 690], ["San Francisco", 154, 893, 284, 154, 915],
  ["Las Vegas", 582, 1015, 206, 462, 1000], ["Los Angeles", 331, 1087, 244, 330, 1110], ["San Diego", 493, 1154, 202, 376, 1176],
  ["San Antonio", 1029, 1355, 242, 1165, 1340], ["Dallas", 1238, 1152, 123, 1237, 1175], ["Houston", 1298, 1375, 170, 1297, 1322],
  ["New York", 2200, 807, 192, 2199, 755], ["Washington", 2207, 870, 236, 2072, 855, true],
];

const MapSvg = styled.svg`
  width: 792px;
  height: 481px;
  text {
    font-family: Roboto, sans-serif;
    text-anchor: middle;
    paint-order: stroke;
    stroke: rgba(255, 255, 255, 0.85);
    stroke-linejoin: round;
  }
`;

const StateText = styled.text`
  font-size: 36px;
  font-weight: 500;
  fill: #5a6064;
  stroke-width: 8px;
`;

const CityText = styled.text`
  font-size: 45px;
  font-weight: 500;
  fill: #202124;
  stroke-width: 9px;
`;

const CountryText = styled(CityText)`
  font-size: 66px;
  font-weight: 700;
  stroke-width: 10px;
`;

const SeaText = styled.text`
  && {
    font-size: 40px;
    fill: #2a62c4;
    stroke: none;
    text-anchor: start;
  }
`;

const Mottle = ({ id, freq, seed, gain, cut }) => (
  <filter id={id} x="0" y="0" width="2400" height="1470" filterUnits="userSpaceOnUse" colorInterpolationFilters="sRGB">
    <feTurbulence type="fractalNoise" baseFrequency={freq} numOctaves="4" seed={seed} />
    <feColorMatrix values={`0 0 0 0 0  0 0 0 0 0  0 0 0 0 0  ${gain} 0 0 0 ${-gain * cut}`} result="holes" />
    <feComposite in="SourceGraphic" in2="holes" operator="in" />
  </filter>
);

const Ragged = ({ id, freq, seed, scale }) => (
  <filter id={id} x="-40" y="-40" width="2480" height="1560" filterUnits="userSpaceOnUse" colorInterpolationFilters="sRGB">
    <feTurbulence type="fractalNoise" baseFrequency={freq} numOctaves="4" seed={seed} result="n" />
    <feDisplacementMap in="SourceGraphic" in2="n" scale={scale} xChannelSelector="R" yChannelSelector="G" />
  </filter>
);

const Shapes = ({ list, fill }) => list.map((d) => <path key={d} d={d} fill={fill} />);

const TerrainMap = () => (
  <MapSvg viewBox="6 12 2376 1443" preserveAspectRatio="none">
    <defs>
      <clipPath id="land"><path d={LAND} /></clipPath>
      <Ragged id="ragged" freq=".022" seed="5" scale="105" />
      <Ragged id="shore" freq=".05" seed="2" scale="18" />
      <Mottle id="mottleMid" freq=".011" seed="8" gain="30" cut=".53" />
      <Mottle id="mottleDark" freq=".016" seed="21" gain="30" cut=".57" />
      <Mottle id="mottleWoods" freq=".02" seed="17" gain="30" cut=".54" />
      <Mottle id="mottleLight" freq=".018" seed="33" gain="30" cut=".61" />
      <Mottle id="mottleCream" freq=".017 .024" seed="14" gain="30" cut=".68" />
      <Mottle id="mottleMontana" freq=".022 .03" seed="9" gain="30" cut=".59" />
      <Mottle id="mottleLakes" freq=".045" seed="4" gain="30" cut=".73" />
    </defs>
    <rect x="0" y="0" width="2400" height="1470" fill="#8ab4f8" />
    <g filter="url(#shore)"><path d={LAND} fill="#bbe2c6" stroke="#bbe2c6" strokeWidth="3" /></g>
    <g clipPath="url(#land)">
      <path d="M1240 260H2382V1455H1200L1300 1100 1260 700Z" fill="#a5dab5" filter="url(#mottleMid)" />
      <g filter="url(#ragged)"><Shapes list={CREAM} fill="#f5f0e4" /></g>
      <path d="M190 260H930V740L1180 950 1100 1455H500L200 900Z" fill="#bbe2c6" filter="url(#mottleCream)" />
      <path d="M190 260H930V620H640L500 700H200Z" fill="#bbe2c6" filter="url(#mottleMontana)" />
      <g filter="url(#ragged)"><Shapes list={GREEN_ON_CREAM} fill="#bbe2c6" /></g>
      <g filter="url(#ragged)"><Shapes list={DARK} fill="#94d2a5" /></g>
      <path d="M6 12H540V470L200 740H60Z" fill="#82c796" filter="url(#mottleWoods)" opacity=".4" />
      <path d="M1300 280H2382V1455H1200V1120L1400 1000Z" fill="#94d2a5" filter="url(#mottleDark)" />
      <path d="M6 12H500V470L200 740H60ZM1307 12H2382V560H1700L1307 400ZM1650 800H2200V1300H1300V1150Z" fill="#b2dfbf" filter="url(#mottleLight)" />
      <path d="M1307 12H2382V480H2000L1700 260 1307 240Z" fill="#8ab4f8" filter="url(#mottleLakes)" />
    </g>
    <g filter="url(#shore)">
      <Shapes list={WATER} fill="#8ab4f8" />
      <Shapes list={LONG_ISLAND} fill="#bbe2c6" />
    </g>
    <g filter="url(#shore)"><Shapes list={SNOW} fill="#fff" /></g>
    <g fill="none" stroke="#5f6a70" strokeWidth="3">
      <g strokeDasharray="9 7" opacity=".8">{STATE_LINES.map((d) => <path key={d} d={d} />)}</g>
      <path d={COUNTRY_LINES} />
    </g>
    {stateLabels.map(([name, x, y, w]) => (
      <StateText key={`${name}${x}${y}`} x={x} y={y + 1} textLength={w + 3}>{name}</StateText>
    ))}
    {cities.map(([name, x, y, w, mx, my, capital]) => (
      <g key={name}>
        <circle cx={mx} cy={my} r={capital ? 12 : 9.5} fill="#fff" stroke={capital ? "#111" : "#444"} strokeWidth="3.4" />
        {capital && <circle cx={mx} cy={my} r="6" fill="#111" />}
        <CityText x={x} y={y} textLength={w}>{name}</CityText>
      </g>
    ))}
    <CountryText x="1044" y="831" textLength="406">United States</CountryText>
    <SeaText transform="translate(527 1330) rotate(55)">Gulf of California</SeaText>
    <path
      d="M1194.5 914C1190 880 1148 870 1148 826A46.5 46.5 0 0 1 1241 826C1241 870 1199 880 1194.5 914Z"
      fill="#1976d2"
      stroke="#125ca8"
      strokeWidth="3"
    />
    <circle cx="1194.5" cy="827" r="17" fill="#14549a" />
  </MapSvg>
);

/* ---------- Screen ---------- */

const navLinks = ["EMAIL CHECKER", "DNS LOOKUP", "TRACEROUTE", "IP LOCATION", "MY IP", "PING", "SEO AUDIT", "PAGE SPEED", "WHOIS", "SSL"];

const CloseX = ({ gap }) => (
  <TabClose $gap={gap}>
    <CrossIcon />
  </TabClose>
);

export default function App() {
  return (
    <Desktop>
      <GlobalStyle />
      <SystemBar>
        <SystemText $w={62} $ls={-0.1}>Activities</SystemText>
        <SystemIcon $gap={37}><ChromeLogo size={16} mono /></SystemIcon>
        <SystemText $w={120} $gap={6} $ls={0.08}>Google Chrome</SystemText>
        <SystemText $w={90} $gap={693} $ls={-0.1}>{"Sep 22  12:27"}</SystemText>
        <SystemIcon $gap={15}><BellIcon /></SystemIcon>
        <Spacer />
        <SystemText $w={18} $ls={-0.3}>en</SystemText>
        <SystemIcon $gap={30}><WifiIcon /></SystemIcon>
        <SystemIcon $gap={13}><VolumeIcon /></SystemIcon>
        <SystemIcon $gap={12}><MicIcon /></SystemIcon>
        <SystemIcon $gap={15}><BatteryIcon /></SystemIcon>
      </SystemBar>
      <Body>
        <Dock>
          <DockSlot $h={28}>
            <DockTile><DockDots /><DockIcon><CrimsonRim /></DockIcon></DockTile>
          </DockSlot>
          {dockItems.map((item, i) =>
            item === "divider" ? (
              <DockDivider key={i} />
            ) : (
              <DockSlot key={i}>
                <DockTile $active={item.active}>
                  <DockDots>{Array.from({ length: item.dots }, (_, n) => <Dot key={n} />)}</DockDots>
                  <DockIcon>{item.icon}</DockIcon>
                </DockTile>
              </DockSlot>
            )
          )}
        </Dock>
        <Browser>
          <TabStrip>
            <Tab $w={240} $radius="10px 10px 0 0">
              <MeetIcon />
              <TabTitle $ls={0.1}>Meet - uoo-mias-qao</TabTitle>
              <RecordIcon />
              <CloseX gap={9} />
            </Tab>
            <TabDivider />
            <Tab $w={239} $radius="10px 10px 0 0" $left={10}>
              <PenguinIcon />
              <TabTitle $fade $gap={7} $ls={0.07}>Online Ping, Traceroute, D</TabTitle>
              <CloseX />
            </Tab>
            <TabDivider />
            <Tab $w={239} $radius="10px 10px 10px 0" $left={12}>
              <GoogleBadge><FcGoogle size={15} /></GoogleBadge>
              <TabTitle $fade $gap={7} $ls={0.07}>visual tracert - Google Sea</TabTitle>
              <CloseX />
            </Tab>
            <Tab $w={239} $radius="10px 10px 0 0" $left={11} $active>
              <GSuiteIcon />
              <TabTitle $fade $gap={7} $ls={0.05}>IP Location - Locate any IP</TabTitle>
              <CloseX />
            </Tab>
            <RoundButton $left={8}><MdAdd size={18} /></RoundButton>
            <Spacer />
            <RoundButton $right={19}><MdKeyboardArrowDown size={18} /></RoundButton>
            <WindowControls>
              <MinimizeIcon />
              <RestoreIcon />
              <CrossIcon size={14} color="#5e5c58" weight={2} />
            </WindowControls>
          </TabStrip>
          <Toolbar>
            <NavIcons>
              <MdArrowBack size={18} color="#111" />
              <MdArrowForward size={18} color="#8f8683" />
              <MdRefresh size={19} color="#111" />
            </NavIcons>
            <Omnibox>
              <MdLock size={14} color="#5a5f63" />
              <Url>gsuite.tools<UrlPath>/ip-location</UrlPath></Url>
              <ActionRow>
                <GoogleBadge><FcGoogle size={14} /></GoogleBadge>
                <MdShare size={16} color="#65635f" />
                <MdStarBorder size={18} color="#65635f" />
              </ActionRow>
            </Omnibox>
            <ActionRow $gap={6}>
              <MdExtension size={18} color="#111" />
              <DownloadIcon />
              <SidePanelIcon />
              <Avatar>Z</Avatar>
              <MdMoreVert size={20} color="#111" />
            </ActionRow>
          </Toolbar>
          <BookmarkBar>
            <Bookmark $w={79} $gap={9} $ls={0.15}><GmailIcon />Gmail</Bookmark>
            <Bookmark $w={101} $ls={0.45}><YouTubeIcon />YouTube</Bookmark>
            <Bookmark $w={76} $ls={0.1}><MapsIcon />Maps</Bookmark>
            <Bookmark $w={110} $ls={0.5}><TranslateIcon />Translate</Bookmark>
            <Spacer />
            <BookmarkDivider />
            <Bookmark $w={122} $gap={7} $ls={0.35}><MdFolder size={17} color="#505050" />All Bookmarks</Bookmark>
          </BookmarkBar>
          <Page>
            <SiteTitle>G Suite.Tools</SiteTitle>
            <SiteNav>
              {navLinks.map((label) => (
                <SiteLink key={label} $active={label === "IP LOCATION"}>{label}</SiteLink>
              ))}
            </SiteNav>
            <Scroller>
              <Content>
                <Heading>IP Location</Heading>
                <IpInput>104.44.197.13</IpInput>
                <FindButton>FIND</FindButton>
                <MapFrame><TerrainMap /></MapFrame>
              </Content>
              <ScrollTrack>
                <svg width="7" height="4" viewBox="0 0 7 4"><path d="M0 4 3.5 0 7 4Z" fill="#a3a3a3" /></svg>
                <ScrollThumb />
                <Spacer />
                <svg width="7" height="4" viewBox="0 0 7 4"><path d="M0 0 3.5 4 7 0Z" fill="#505050" /></svg>
              </ScrollTrack>
            </Scroller>
          </Page>
        </Browser>
      </Body>
    </Desktop>
  );
}
